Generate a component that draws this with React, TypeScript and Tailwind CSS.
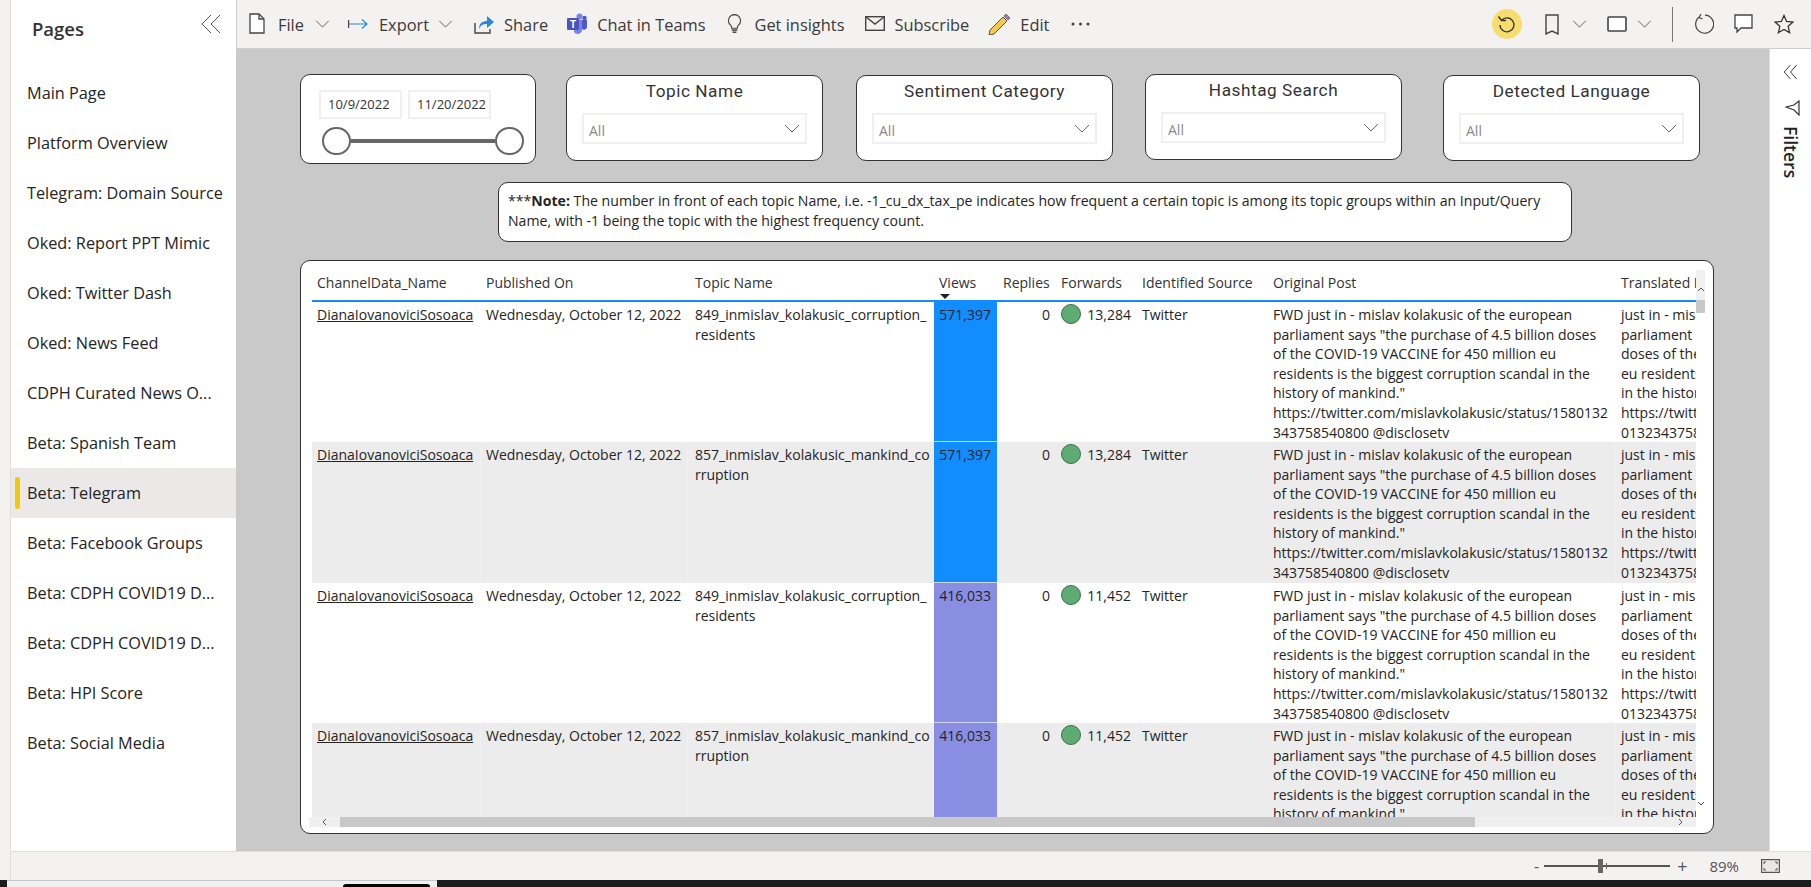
import React from "react";

const pages = ["Main Page","Platform Overview","Telegram: Domain Source","Oked: Report PPT Mimic","Oked: Twitter Dash","Oked: News Feed","CDPH Curated News O...","Beta: Spanish Team","Beta: Telegram","Beta: Facebook Groups","Beta: CDPH COVID19 D...","Beta: CDPH COVID19 D...","Beta: HPI Score","Beta: Social Media"];

const post = ["FWD just in - mislav kolakusic of the european","parliament says \"the purchase of 4.5 billion doses","of the COVID-19 VACCINE for 450 million eu","residents is the biggest corruption scandal in the","history of mankind.\"","https://twitter.com/mislavkolakusic/status/1580132","343758540800 @disclosetv"];
const translated = ["just in - mislav kolakusic of the","parliament says \"the purchase","doses of the COVID-19","eu residents is the biggest","in the history of mankind","https://twitter.com/mislav","0132343758540800"];

const rows = [
  { topic: ["849_inmislav_kolakusic_corruption_","residents"], views: "571,397", fwd: "13,284", color: "bg-[#118dff]", h: "h-[140px]", grey: false },
  { topic: ["857_inmislav_kolakusic_mankind_co","rruption"], views: "571,397", fwd: "13,284", color: "bg-[#118dff]", h: "h-[141px]", grey: true },
  { topic: ["849_inmislav_kolakusic_corruption_","residents"], views: "416,033", fwd: "11,452", color: "bg-[#8a8ee2]", h: "h-[140px]", grey: false },
  { topic: ["857_inmislav_kolakusic_mankind_co","rruption"], views: "416,033", fwd: "11,452", color: "bg-[#8a8ee2]", h: "h-[141px]", grey: true },
];

const Chevron = ({ className = "" }: { className?: string }) => (
  <svg viewBox="0 0 16 9" className={className} fill="none" stroke="currentColor" strokeWidth="1"><path d="M1 1l7 7 7-7" /></svg>
);

const Slicer = ({ title, className, ddClass }: { title: string; className: string; ddClass: string }) => (
  <div className={`shrink-0 w-[257px] h-[86px] bg-white rounded-[10px] border border-[#333] ${className}`}>
    <div className="text-center text-[17.2px] leading-[20px] tracking-[0.55px] text-[#333] mt-[5px] font-['Roboto',sans-serif]">{title}</div>
    <div className={`h-[31px] border-2 border-[#f0f0f0] flex items-center justify-between pl-[5px] pr-[5px] ${ddClass}`}>
      <span className="text-[14px] text-[#8a8a8a] mt-[3px]">All</span>
      <Chevron className="w-[16px] h-[9px] text-[#666]" />
    </div>
  </div>
);

const Cell = ({ children, grey, className = "" }: { children: React.ReactNode; grey: boolean; className?: string }) => (
  <div className={`overflow-hidden whitespace-nowrap pl-[5px] pt-[3px] ${grey ? "border-r border-[#f0f0f0]" : ""} ${className}`}>{children}</div>
);

const Row = ({ r }: { r: (typeof rows)[number] }) => (
  <div className={`grid grid-cols-[169px_207px_246px_63px_59px_81px_131px_348px_80px] ${r.h} shrink-0 ${r.grey ? "bg-[#ececec]" : "bg-white"}`}>
    <Cell grey={r.grey}><span className="underline">DianaIovanoviciSosoaca</span></Cell>
    <Cell grey={r.grey}>Wednesday, October 12, 2022</Cell>
    <Cell grey={r.grey} className="pl-[7px]">{r.topic.map((t) => <div key={t}>{t}</div>)}</Cell>
    <div className={`${r.color} text-right pr-[6px] pt-[3px] text-[#252423] border-b border-[#cfd8ee]`}>{r.views}</div>
    <div className="text-right pr-[6px] pt-[3px]">0</div>
    <div className="flex justify-between pl-[5px] pr-[6px]">
      <span className="mt-[2px] w-[20px] h-[20px] rounded-full bg-[#5eab73] border border-[#3c6e4a]" />
      <span className="pt-[3px]">{r.fwd}</span>
    </div>
    <Cell grey={false}>Twitter</Cell>
    <Cell grey={r.grey}>{post.map((t) => <div key={t}>{t}</div>)}</Cell>
    <Cell grey={false}>{translated.map((t) => <div key={t}>{t}</div>)}</Cell>
  </div>
);

const Item = ({ children, label, className = "" }: { children: React.ReactNode; label: string; className?: string }) => (
  <div className={`flex items-center ${className}`}>{children}<span className="mt-[2px]">{label}</span></div>
);

export default function App() {
  return (
    <div className="w-[1811px] h-[887px] flex flex-col overflow-hidden font-['Open_Sans',sans-serif] text-[#252423]">
      <div className="flex h-[880px]">
        <div className="w-[11px] shrink-0 bg-[#f3f2f1] border-r border-[#e1dfdd]" />
        <div className="flex-1 flex flex-col min-w-0">
          <div className="flex h-[851px]">
            {/* Pages */}
            <aside className="w-[225px] shrink-0 bg-white">
              <div className="h-[68px] relative">
                <div className="pl-[21px] pt-[15px] text-[18.5px] font-semibold text-[#333]">Pages</div>
                <svg viewBox="0 0 20 20" className="absolute left-[190px] top-[14px] w-[20px] h-[20px] text-[#555]" fill="none" stroke="currentColor" strokeWidth="1"><path d="M10 1L1 10l9 9M19 1l-9 9 9 9" /></svg>
              </div>
              {pages.map((p, i) => (
                <div key={i} className={`relative h-[50px] flex items-center pl-[16px] text-[16.3px] whitespace-nowrap ${p === "Beta: Telegram" ? "bg-[#ebe9e8]" : ""}`}>
                  {p === "Beta: Telegram" && <span className="absolute left-[4px] top-[9px] w-[5px] h-[32px] rounded-[2px] bg-[#f2c80f]" />}
                  {p}
                </div>
              ))}
            </aside>
            <div className="flex-1 flex flex-col min-w-0">
              {/* Toolbar */}
              <header className="h-[49px] shrink-0 flex items-center bg-[#f3f2f1] border-l border-b border-[#d2d0ce] text-[16.4px] text-[#3b3a39] whitespace-nowrap relative">
                <Item label="File" className="ml-[12px]">
                  <svg viewBox="0 0 16 21" className="w-[16px] h-[21px] mr-[13px]" fill="#fff" stroke="#444" strokeWidth="1.3"><path d="M1 1h9l5 5v14H1z" /><path d="M10 1v5h5" fill="none" /></svg>
                </Item>
                <Chevron className="w-[15px] h-[8px] ml-[11px] text-[#555]" />
                <Item label="Export" className="ml-[18px]">
                  <svg viewBox="0 0 20 12" className="w-[20px] h-[12px] mr-[11px]" fill="none" stroke="#2b88d8" strokeWidth="1.2"><path d="M.6 2v8" stroke="#444" /><path d="M1 6h18M14 1.5L19 6l-5 4.5" /></svg>
                </Item>
                <Chevron className="w-[15px] h-[8px] ml-[9px] text-[#555]" />
                <Item label="Share" className="ml-[21px]">
                  <svg viewBox="0 0 20 20" className="w-[20px] h-[20px] mr-[10px]" fill="none"><path d="M1 9v10h15v-4" stroke="#444" strokeWidth="1.4" /><path d="M5 15c0-6 4-8 8-8V2l7 6-7 6V10c-4 0-6 1-8 5z" fill="#2b88d8" /></svg>
                </Item>
                <Item label="Chat in Teams" className="ml-[19px]">
                  <svg viewBox="0 0 20 22" className="w-[20px] h-[22px] mr-[10px]"><circle cx="12.5" cy="3.5" r="3" fill="#7b83eb" /><circle cx="17.5" cy="5" r="2.2" fill="#5059c9" /><path d="M7 7h8v11a4.5 4.5 0 0 1-8 1z" fill="#7b83eb" /><path d="M15 7h5v7a3 3 0 0 1-5 2z" fill="#5059c9" /><rect x="0" y="5" width="12" height="12" rx="1" fill="#4b53bc" /><text x="6" y="14.5" textAnchor="middle" fontSize="10" fontWeight="700" fill="#fff" fontFamily="Liberation Sans">T</text></svg>
                </Item>
                <Item label="Get insights" className="ml-[21px]">
                  <svg viewBox="0 0 16 21" className="w-[15px] h-[21px] mr-[13px]" fill="none" stroke="#444" strokeWidth="1.2"><path d="M8 1a6.5 6.5 0 0 0-4 11.5c1 1 1 2 1 3h6c0-1 0-2 1-3A6.5 6.5 0 0 0 8 1z" /><path d="M5 17.5h6" strokeWidth="1.6" /><path d="M6 19.8h4" strokeWidth="1.6" /></svg>
                </Item>
                <Item label="Subscribe" className="ml-[21px]">
                  <svg viewBox="0 0 20 15" className="w-[20px] h-[15px] mr-[9px]" fill="none" stroke="#444" strokeWidth="1.4"><rect x=".7" y=".7" width="18.6" height="13.6" /><path d="M1 1l9 7 9-7" /></svg>
                </Item>
                <Item label="Edit" className="ml-[19px]">
                  <svg viewBox="0 0 22 22" className="w-[22px] h-[22px] mr-[10px]"><path d="M2 17L15 4l4 4L6 21l-5 1z" fill="#f2c94c" stroke="#555" strokeWidth="1" /><path d="M16 3l2-2 4 4-2 2z" fill="#b178c8" stroke="#555" strokeWidth=".8" /></svg>
                </Item>
                <svg viewBox="0 0 19 4" className="w-[19px] h-[4px] ml-[22px]" fill="#444"><circle cx="2" cy="2" r="1.5" /><circle cx="9.5" cy="2" r="1.5" /><circle cx="17" cy="2" r="1.5" /></svg>
                <div className="ml-auto flex items-center mr-[17px]">
                  <span className="w-[30px] h-[30px] rounded-full bg-[#f7dc6f] flex items-center justify-center">
                    <svg viewBox="0 0 20 20" className="w-[20px] h-[20px]" fill="none" stroke="#333" strokeWidth="1.3"><path d="M4.5 6.5A7 7 0 1 1 3 11" /><path d="M1.5 2.5l3 4h4.5" /></svg>
                  </span>
                  <svg viewBox="0 0 14 21" className="w-[14px] h-[21px] ml-[23px]" fill="none" stroke="#444" strokeWidth="1.4"><path d="M1 1h12v19l-6-3-6 3z" /></svg>
                  <Chevron className="w-[15px] h-[8px] ml-[13px] text-[#555]" />
                  <svg viewBox="0 0 20 16" className="w-[20px] h-[16px] ml-[20px]" fill="#fff" stroke="#444" strokeWidth="1.6"><rect x="1" y="1" width="18" height="14" rx="1" /></svg>
                  <Chevron className="w-[15px] h-[8px] ml-[10px] text-[#555]" />
                  <span className="w-px h-[35px] bg-[#777] ml-[20px]" />
                  <svg viewBox="0 0 21 21" className="w-[21px] h-[21px] ml-[20px]" fill="none" stroke="#444" strokeWidth="1.2"><path d="M6 3.2a9 9 0 1 0 6-2" /><path d="M8 0l-2 3.5 3.5 1.5" /></svg>
                  <svg viewBox="0 0 19 20" className="w-[19px] h-[20px] ml-[20px]" fill="#fff" stroke="#444" strokeWidth="1.3"><path d="M1 1h17v13H7l-4 4v-4H1z" /></svg>
                  <svg viewBox="0 0 20 20" className="w-[20px] h-[20px] ml-[21px]" fill="none" stroke="#333" strokeWidth="1.3"><path d="M10 1.5l2.6 5.9 6.4.6-4.8 4.3 1.4 6.3L10 15.4l-5.6 3.2 1.4-6.3L1 8l6.4-.6z" /></svg>
                </div>
              </header>
              <div className="flex-1 flex min-h-0">
                {/* Canvas */}
                <main className="w-[1533px] shrink-0 bg-[#c9c9c9] pl-[64px] text-[14px]">
                  <div className="flex items-start h-[115px]">
                    <div className="mt-[25px] shrink-0 w-[236px] h-[90px] bg-white rounded-[10px] border border-[#333] pl-[18px] pt-[15px]">
                      <div className="flex gap-[6px]">
                        <div className="w-[83px] h-[29px] border-2 border-[#f0f0f0] flex items-center pl-[7px] text-[13px] text-[#333]">10/9/2022</div>
                        <div className="w-[83px] h-[29px] border-2 border-[#f0f0f0] flex items-center pl-[7px] text-[13px] text-[#333]">11/20/2022</div>
                      </div>
                      <div className="flex items-center ml-[3px] mt-[8px]">
                        <span className="w-[29px] h-[28px] rounded-full border-2 border-[#666] bg-white shrink-0" />
                        <span className="w-[144px] h-[4px] bg-[#666]" />
                        <span className="w-[29px] h-[28px] rounded-full border-2 border-[#666] bg-white shrink-0" />
                      </div>
                    </div>
                    <Slicer title="Topic Name" className="mt-[26px] ml-[30px]" ddClass="mx-[15px] mt-[12px]" />
                    <Slicer title="Sentiment Category" className="mt-[26px] ml-[33px]" ddClass="mx-[15px] mt-[12px]" />
                    <Slicer title="Hashtag Search" className="mt-[25px] ml-[32px]" ddClass="mx-[15px] mt-[12px]" />
                    <Slicer title="Detected Language" className="mt-[26px] ml-[41px]" ddClass="mx-[15px] mt-[12px]" />
                  </div>
                  <div className="ml-[198px] mt-[18px] w-[1074px] h-[60px] bg-white rounded-[10px] border border-[#333] pl-[9px] pt-[8px] text-[14.1px] leading-[20px] whitespace-nowrap">
                    <div>***<b>Note:</b> The number in front of each topic Name, i.e. -1_cu_dx_tax_pe indicates how frequent a certain topic is among its topic groups within an Input/Query</div>
                    <div>Name, with -1 being the topic with the highest frequency count.</div>
                  </div>
                  <div className="mt-[18px] w-[1414px] h-[574px] bg-white rounded-[10px] border border-[#333] flex pl-[8px] pt-[9px] overflow-hidden leading-[19.6px]">
                    <div className="w-[1387px] shrink-0 flex flex-col">
                      <div className="h-[32px] shrink-0 ml-[3px] border-b-2 border-[#118dff] grid grid-cols-[169px_207px_246px_63px_59px_81px_131px_348px_80px] text-[#333] pt-[3px] whitespace-nowrap">
                        <div className="pl-[5px]">ChannelData_Name</div>
                        <div className="pl-[5px]">Published On</div>
                        <div className="pl-[7px]">Topic Name</div>
                        <div className="pl-[5px] relative">Views
                          <span className="absolute left-[6px] top-[21px] border-x-[5px] border-x-transparent border-t-[5px] border-t-[#252423]" />
                        </div>
                        <div className="pl-[6px]">Replies</div>
                        <div className="pl-[5px]">Forwards</div>
                        <div className="pl-[5px]">Identified Source</div>
                        <div className="pl-[5px]">Original Post</div>
                        <div className="pl-[5px] overflow-hidden">Translated Post</div>
                      </div>
                      <div className="h-[515px] shrink-0 ml-[3px] overflow-hidden flex flex-col">
                        {rows.map((r, i) => <Row key={i} r={r} />)}
                      </div>
                      <div className="h-[10px] shrink-0 flex items-center bg-[#efefef]">
                        <div className="w-[31px] flex justify-center">
                          <svg viewBox="0 0 5 8" className="w-[5px] h-[8px]" fill="none" stroke="#555"><path d="M4 1L1 4l3 3" /></svg>
                        </div>
                        <div className="w-[1135px] h-full bg-[#c8c8c8]" />
                        <div className="flex-1 flex justify-end pr-[13px]">
                          <svg viewBox="0 0 5 8" className="w-[5px] h-[8px]" fill="none" stroke="#555"><path d="M1 1l3 3-3 3" /></svg>
                        </div>
                      </div>
                    </div>
                    <div className="w-[9px] h-[547px] shrink-0 flex flex-col items-center">
                      <div className="h-[30px] w-full bg-[#f0f0f0] flex items-center justify-center pt-[8px]">
                        <svg viewBox="0 0 8 5" className="w-[8px] h-[5px]" fill="none" stroke="#555"><path d="M1 4l3-3 3 3" /></svg>
                      </div>
                      <div className="h-[13px] w-full bg-[#c8c8c8]" />
                      <div className="flex-1" />
                      <svg viewBox="0 0 8 5" className="w-[8px] h-[5px] mb-[11px]" fill="none" stroke="#555"><path d="M1 1l3 3 3-3" /></svg>
                    </div>
                  </div>
                </main>
                {/* Filters */}
                <div className="flex-1 bg-white border-l border-[#e1dfdd] flex flex-col items-center text-[#252423]">
                  <svg viewBox="0 0 16 18" className="w-[15px] h-[16px] mt-[15px]" fill="none" stroke="#333" strokeWidth="1.1"><path d="M8 1L1 9l7 8M15 1L8 9l7 8" /></svg>
                  <svg viewBox="0 0 15 16" className="w-[15px] h-[16px] mt-[20px] ml-[4px]" fill="none" stroke="#333" strokeWidth="1.2"><path d="M14 1v14l-5-5-8-3 8-2z" /></svg>
                  <div className="[writing-mode:vertical-rl] text-[17.5px] font-semibold mt-[10px] leading-[22px]">Filters</div>
                </div>
              </div>
            </div>
          </div>
          {/* Status bar */}
          <footer className="h-[29px] shrink-0 bg-[#f3f2f1] border-t border-[#e1dfdd] flex items-center justify-end pr-[31px] text-[#555]">
            <span className="text-[16px] leading-none">-</span>
            <div className="relative w-[126px] h-[1.5px] bg-[#555] ml-[5px]">
              <span className="absolute left-[54px] -top-[6px] w-[5px] h-[14px] bg-[#666]" />
              <span className="absolute left-[62px] -top-[2px] w-[1px] h-[6px] bg-[#666]" />
            </div>
            <span className="text-[18px] leading-none ml-[7px]">+</span>
            <span className="text-[15px] ml-[22px]">89%</span>
            <svg viewBox="0 0 19 14" className="w-[19px] h-[14px] ml-[22px]" fill="#e8e8e8" stroke="#555" strokeWidth="1.2"><rect x=".6" y=".6" width="17.8" height="12.8" /><path d="M5 3H3v2M14 3h2v2M5 11H3V9M14 11h2V9" fill="none" strokeWidth="1" /></svg>
          </footer>
        </div>
      </div>
      <div className="h-[7px] shrink-0 bg-[#1c1c1c] flex">
        <div className="ml-[7px] w-[430px] h-full bg-[#f0f0f0] border-t border-[#c8c8c8] flex justify-end items-end pr-[7px]">
          <span className="w-[87px] h-[3px] bg-black rounded-t-[4px]" />
        </div>
      </div>
    </div>
  );
}
